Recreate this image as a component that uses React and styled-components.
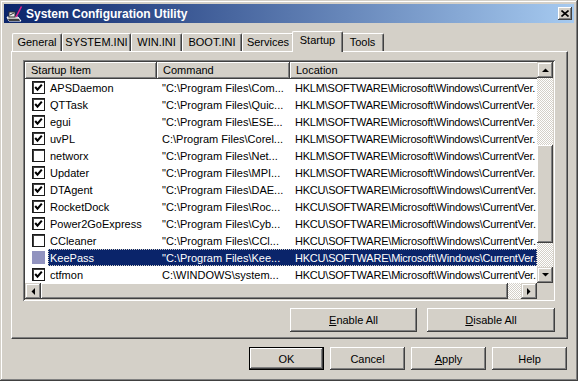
import React from "react";
import styled, { createGlobalStyle, css } from "styled-components";

const FACE = "#d4d0c8";
const SHADOW = "#808080";
const DARK = "#404040";
const NAVY = "#0a246a";

const raised = css`
  box-shadow: inset -1px -1px ${DARK}, inset 1px 1px #fff,
    inset -2px -2px ${SHADOW}, inset 2px 2px ${FACE};
`;

const sunken = css`
  box-shadow: inset 1px 1px ${SHADOW}, inset -1px -1px #fff,
    inset 2px 2px ${DARK}, inset -2px -2px ${FACE};
`;

const hatch = css`
  background-color: #fff;
  background-image: repeating-conic-gradient(${FACE} 0 25%, #fff 0 50%);
  background-size: 2px 2px;
`;

const GlobalStyle = createGlobalStyle`
  html, body {
    margin: 0;
    padding: 0;
    background: ${FACE};
    font-family: "Liberation Sans", Arial, sans-serif;
    font-size: 11px;
    color: #000;
  }
  #root {
    width: 578px;
    height: 381px;
    overflow: hidden;
  }
`;

const Window = styled.div`
  width: 578px;
  height: 381px;
  box-sizing: border-box;
  padding: 4px;
  display: flex;
  flex-direction: column;
  background: ${FACE};
  box-shadow: inset -1px -1px ${DARK}, inset 1px 1px ${FACE},
    inset -2px -2px ${SHADOW}, inset 2px 2px #fff;
`;

const TitleBar = styled.div`
  flex: none;
  height: 19px;
  display: flex;
  align-items: center;
  padding: 0 2px;
  background: linear-gradient(to right, ${NAVY}, #a6caf0);
  color: #fff;
  font-weight: bold;
  font-size: 12px;
  svg.app {
    margin-right: 3px;
  }
`;

const CloseButton = styled.div`
  margin-left: auto;
  width: 14px;
  height: 13px;
  background: ${FACE};
  ${raised};
  display: grid;
  place-items: center;
`;

const Body = styled.div`
  flex: 1;
  display: flex;
  flex-direction: column;
  padding: 8px 6px 0 7px;
`;

const TabStrip = styled.div`
  height: 20px;
  display: flex;
  align-items: flex-end;
  padding-left: 1px;
  position: relative;
  z-index: 1;
`;

const Tab = styled.div`
  box-sizing: border-box;
  width: ${(p) => (p.$active ? p.$w + 4 : p.$w)}px;
  height: ${(p) => (p.$active ? 21 : 18)}px;
  margin: ${(p) => (p.$active ? "0 -2px -1px" : "0")};
  position: relative;
  z-index: ${(p) => (p.$active ? 2 : 1)};
  background: ${FACE};
  border-top: 1px solid #fff;
  border-left: 1px solid #fff;
  border-right: 1px solid ${DARK};
  border-radius: 2px 2px 0 0;
  box-shadow: inset -1px 0 ${SHADOW};
  text-align: center;
  line-height: ${(p) => (p.$active ? 17 : 16)}px;
  white-space: nowrap;
`;

const Pane = styled.div`
  height: 288px;
  box-sizing: border-box;
  border-top: 1px solid #fff;
  border-left: 1px solid #fff;
  border-right: 1px solid ${DARK};
  border-bottom: 1px solid ${DARK};
  box-shadow: inset -1px -1px ${SHADOW};
  padding: 8px 12px 0 11px;
  display: flex;
  flex-direction: column;
`;

const ListFrame = styled.div`
  height: 241px;
  box-sizing: border-box;
  padding: 2px;
  ${sunken};
  background: #fff;
  display: grid;
  grid-template-columns: 1fr 16px;
  grid-template-rows: 1fr 16px;
`;

const Viewport = styled.div`
  overflow: hidden;
  background: #fff;
  min-width: 0;
`;

const Header = styled.div`
  display: flex;
  height: 17px;
`;

const HeaderCell = styled.div`
  flex: none;
  width: ${(p) => p.$w}px;
  box-sizing: border-box;
  padding-left: 6px;
  line-height: 17px;
  background: ${FACE};
  box-shadow: inset -1px -1px ${DARK}, inset 1px 1px #fff,
    inset -2px -2px ${SHADOW};
  white-space: nowrap;
`;

const Row = styled.div`
  display: flex;
  height: 17px;
  align-items: center;
  white-space: nowrap;
`;

const CheckZone = styled.div`
  flex: none;
  width: 23px;
  box-sizing: border-box;
  padding-left: 7px;
  display: flex;
  align-items: center;
`;

const Box = styled.div`
  width: 13px;
  height: 13px;
  box-sizing: border-box;
  background: ${(p) => (p.$tinted ? "#9193bf" : "#fff")};
  box-shadow: ${(p) =>
    p.$tinted ? "none" : `inset 0 0 0 1px #1a1a1a, inset 2px 2px ${DARK}`};
  display: grid;
  place-items: center;
`;

const Line = styled.div`
  flex: none;
  display: flex;
  height: 17px;
  align-items: center;
  background: ${(p) => (p.$selected ? NAVY : "transparent")};
  color: ${(p) => (p.$selected ? "#fff" : "#000")};
  outline: ${(p) => (p.$selected ? `1px dotted ${FACE}` : "none")};
  outline-offset: -1px;
`;

const Cell = styled.div`
  flex: none;
  width: ${(p) => p.$w}px;
  box-sizing: border-box;
  padding-left: ${(p) => p.$pad}px;
  letter-spacing: ${(p) => p.$track || 0}px;
  overflow: hidden;
`;

const VScroll = styled.div`
  display: flex;
  flex-direction: column;
`;

const HScroll = styled.div`
  display: flex;
  min-width: 0;
`;

const Track = styled.div`
  flex: ${(p) => (p.$size ? "none" : "1")};
  ${(p) => (p.$vertical ? `height: ${p.$size}px;` : `width: ${p.$size}px;`)}
  ${hatch};
`;

const Thumb = styled.div`
  flex: none;
  ${(p) => (p.$vertical ? `height: ${p.$size}px;` : `width: ${p.$size}px;`)}
  background: ${FACE};
  ${raised};
`;

const ArrowButton = styled.div`
  flex: none;
  width: 16px;
  height: 16px;
  background: ${FACE};
  box-shadow: inset -1px -1px ${DARK}, inset 1px 1px ${FACE},
    inset -2px -2px ${SHADOW}, inset 2px 2px #fff;
  display: grid;
  place-items: center;
`;

const Corner = styled.div`
  background: ${FACE};
`;

const ButtonRow = styled.div`
  display: flex;
  justify-content: flex-end;
  gap: ${(p) => p.$gap}px;
  margin-top: ${(p) => p.$top}px;
  padding-right: ${(p) => p.$right || 0}px;
`;

const Button = styled.div`
  box-sizing: border-box;
  width: ${(p) => p.$w}px;
  height: ${(p) => p.$h}px;
  background: ${FACE};
  display: grid;
  place-items: center;
  ${(p) =>
    p.$default
      ? css`
          box-shadow: inset 0 0 0 1px #000, inset -2px -2px ${DARK},
            inset 2px 2px #fff, inset -3px -3px ${SHADOW};
        `
      : raised};
  u {
    text-decoration-thickness: 1px;
    text-underline-offset: 1px;
  }
`;

const Arrow = ({ dir }) => {
  const pts = {
    up: "0,4 7,4 3.5,0.5",
    down: "0,0 7,0 3.5,3.5",
    left: "4,0 4,7 0.5,3.5",
    right: "0,0 0,7 3.5,3.5",
  }[dir];
  const horiz = dir === "left" || dir === "right";
  return (
    <svg width={horiz ? 4 : 7} height={horiz ? 7 : 4} viewBox={horiz ? "0 0 4 7" : "0 0 7 4"}>
      <polygon points={pts} fill="#000" />
    </svg>
  );
};

const Check = () => (
  <svg width="9" height="9" viewBox="0 0 9 9">
    <polyline points="1.2,4 3.5,6.6 7.8,1.6" fill="none" stroke="#000" strokeWidth="2.1" />
  </svg>
);

const AppIcon = () => (
  <svg className="app" width="17" height="16" viewBox="0 0 17 16">
    <polygon points="1,11 12,11 15,15 3,15" fill="#c0c0c0" stroke="#fff" strokeWidth="1" />
    <polygon points="2,13 13,13 14,15 3,15" fill="#404040" />
    <rect x="3" y="6" width="6" height="5" fill="#e8e8e8" stroke="#303030" strokeWidth="1" />
    <line x1="4" y1="9" x2="8" y2="7" stroke="#303030" strokeWidth="1" />
    <line x1="15.5" y1="0.5" x2="10" y2="11" stroke="#e0208a" strokeWidth="1.6" />
  </svg>
);

const rows = [
  { name: "APSDaemon", on: true, cmd: '"C:\\Program Files\\Com...', key: "HKLM" },
  { name: "QTTask", on: true, cmd: '"C:\\Program Files\\Quic...', key: "HKLM" },
  { name: "egui", on: true, cmd: '"C:\\Program Files\\ESE...', key: "HKLM" },
  { name: "uvPL", on: true, cmd: "C:\\Program Files\\Corel...", key: "HKLM" },
  { name: "networx", on: false, cmd: '"C:\\Program Files\\Net...', key: "HKLM" },
  { name: "Updater", on: true, cmd: '"C:\\Program Files\\MPI...', key: "HKLM" },
  { name: "DTAgent", on: true, cmd: '"C:\\Program Files\\DAE...', key: "HKCU" },
  { name: "RocketDock", on: true, cmd: '"C:\\Program Files\\Roc...', key: "HKCU" },
  { name: "Power2GoExpress", on: true, cmd: '"C:\\Program Files\\Cyb...', key: "HKCU" },
  { name: "CCleaner", on: false, cmd: '"C:\\Program Files\\CCl...', key: "HKCU" },
  { name: "KeePass", on: false, selected: true, cmd: '"C:\\Program Files\\Kee...', key: "HKCU" },
  { name: "ctfmon", on: true, cmd: "C:\\WINDOWS\\system...", key: "HKCU" },
];

const tabs = [
  ["General", 50],
  ["SYSTEM.INI", 69],
  ["WIN.INI", 51],
  ["BOOT.INI", 60],
  ["Services", 52],
  ["Startup", 47],
  ["Tools", 43],
];

export default function App() {
  return (
    <>
      <GlobalStyle />
      <Window>
        <TitleBar>
          <AppIcon />
          <span>System Configuration Utility</span>
          <CloseButton>
            <svg width="8" height="7" viewBox="0 0 8 7">
              <path d="M0.5 0.5 L7.5 6.5 M7.5 0.5 L0.5 6.5" stroke="#000" strokeWidth="1.6" />
            </svg>
          </CloseButton>
        </TitleBar>
        <Body>
          <TabStrip>
            {tabs.map(([label, w]) => (
              <Tab key={label} $w={w} $active={label === "Startup"}>
                {label}
              </Tab>
            ))}
          </TabStrip>
          <Pane>
            <ListFrame>
              <Viewport>
                <Header>
                  <HeaderCell $w={132}>Startup Item</HeaderCell>
                  <HeaderCell $w={133}>Command</HeaderCell>
                  <HeaderCell $w={320}>Location</HeaderCell>
                </Header>
                {rows.map((r) => (
                  <Row key={r.name}>
                    <CheckZone>
                      <Box $tinted={r.selected}>{r.on && <Check />}</Box>
                    </CheckZone>
                    <Line $selected={r.selected}>
                      <Cell $w={109} $pad={2}>{r.name}</Cell>
                      <Cell $w={133} $pad={5}>{r.cmd}</Cell>
                      <Cell $w={247} $pad={5} $track={-0.22}>
                        {r.key}\SOFTWARE\Microsoft\Windows\CurrentVer.
                      </Cell>
                    </Line>
                  </Row>
                ))}
              </Viewport>
              <VScroll>
                <ArrowButton>
                  <Arrow dir="up" />
                </ArrowButton>
                <Track $vertical $size={67} />
                <Thumb $vertical $size={98} />
                <Track $vertical />
                <ArrowButton>
                  <Arrow dir="down" />
                </ArrowButton>
              </VScroll>
              <HScroll>
                <ArrowButton>
                  <Arrow dir="left" />
                </ArrowButton>
                <Thumb $size={467} />
                <Track />
                <ArrowButton>
                  <Arrow dir="right" />
                </ArrowButton>
              </HScroll>
              <Corner />
            </ListFrame>
            <ButtonRow $gap={10} $top={7}>
              <Button $w={127} $h={24}>
                <span>
                  <u>E</u>nable All
                </span>
              </Button>
              <Button $w={128} $h={24}>
                <span>
                  <u>D</u>isable All
                </span>
              </Button>
            </ButtonRow>
          </Pane>
          <ButtonRow $gap={6} $top={8} $right={1}>
            <Button $w={75} $h={23} $default>
              OK
            </Button>
            <Button $w={75} $h={23}>
              Cancel
            </Button>
            <Button $w={75} $h={23}>
              <span>
                <u>A</u>pply
              </span>
            </Button>
            <Button $w={75} $h={23}>
              Help
            </Button>
          </ButtonRow>
        </Body>
      </Window>
    </>
  );
}
